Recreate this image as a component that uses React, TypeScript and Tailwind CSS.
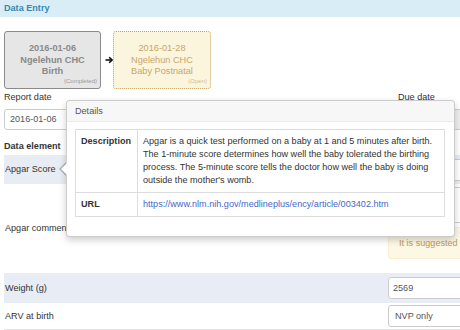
import React from 'react';

const DESCRIPTION =
  "Apgar is a quick test performed on a baby at 1 and 5 minutes after birth. The 1-minute score determines how well the baby tolerated the birthing process. The 5-minute score tells the doctor how well the baby is doing outside the mother's womb.";

function EventBox({ date, org, stage, status, done }: { date: string; org: string; stage: string; status: string; done?: boolean }) {
  return (
    <div
      className={
        done
          ? 'w-[97px] h-[58px] flex flex-col border border-[#8a8a8a] rounded-[3px] bg-[#e6e6e6] text-[#8a8a8a] font-bold'
          : 'w-[98px] h-[58px] flex flex-col border border-dotted border-[#c9a45f] rounded-[3px] bg-[#fcf5dd] text-[#c8a56a]'
      }
    >
      <div className="pt-[11px] text-center text-[9.2px] leading-[11.5px]">
        <div>{date}</div>
        <div>{org}</div>
        <div>{stage}</div>
      </div>
      <div className={done ? 'text-right pr-[3px] text-[6px] leading-[7px] font-normal text-[#999]' : 'text-right pr-[3px] text-[6px] leading-[7px] text-[#d5bb8c]'}>
        {status}
      </div>
    </div>
  );
}

function Row({ label, shaded, children, height }: { label: string; shaded?: boolean; children?: React.ReactNode; height: string }) {
  return (
    <div className={`flex ${height} ${shaded ? 'bg-[#e8edf5]' : 'bg-white'}`}>
      <div className="w-[384px] pl-[1px] flex items-center">{label}</div>
      <div className="w-[110px] flex flex-col justify-center">{children}</div>
    </div>
  );
}

export default function App() {
  return (
    <div className="relative w-[460px] h-[330px] overflow-hidden bg-white font-['Liberation_Sans',Arial,sans-serif] text-[9.1px] leading-[13px] text-[#333]">
      <div className="h-[17px] bg-[#d9edf7] px-[4px] flex items-center font-bold text-[#3a87ad]">Data Entry</div>

      <div className="w-[520px] px-[4px]">
        <div className="mt-[14px] flex items-center">
          <EventBox date="2016-01-06" org="Ngelehun CHC" stage="Birth" status="(Completed)" done />
          <svg className="ml-[4px] w-[8px] h-[8px]" viewBox="0 0 8 8" fill="none" stroke="#111" strokeWidth="1.6">
            <path d="M0.5 4H7" />
            <path d="M4.2 1.2L7 4L4.2 6.8" />
          </svg>
          <EventBox date="2016-01-28" org="Ngelehun CHC" stage="Baby Postnatal" status="(Open)" />
        </div>

        <div className="mt-[2px] flex">
          <div className="w-[394px]">
            <div>Report date</div>
            <div className="mt-[5px] w-[130px] h-[21px] border border-[#ccc] rounded-[3px] px-[5px] flex items-center text-[#555]">2016-01-06</div>
          </div>
          <div className="w-[110px]">
            <div>Due date</div>
            <div className="mt-[5px] h-[21px] border border-[#ccc] rounded-[3px] bg-[#eee]" />
          </div>
        </div>

        <div className="mt-[10px] font-bold">Data element</div>

        <div className="mt-[2px]">
          <Row label="Apgar Score" shaded height="h-[29px]">
            <div className="h-[22px] border border-[#ccc] rounded-[3px] bg-white" />
          </Row>
          <div className="flex h-[89px] bg-white">
            <div className="w-[384px] pl-[1px] flex items-center">Apgar comment</div>
            <div className="w-[110px] pt-[3px]">
              <div className="h-[36px] border border-[#ccc] rounded-[3px] bg-white" />
              <div className="mt-[4px] h-[32px] border border-[#fbeed5] rounded-[3px] bg-[#fcf8e3] pl-[10px] flex items-center whitespace-nowrap text-[#c09853]">
                It is suggested
              </div>
            </div>
          </div>
          <Row label="Weight (g)" shaded height="h-[30px]">
            <div className="h-[22px] border border-[#ccc] rounded-[3px] bg-white pl-[4px] flex items-center text-[#555]">2569</div>
          </Row>
          <div className="border-b border-[#e2e2e2]">
            <Row label="ARV at birth" height="h-[26px]">
              <div className="h-[22px] border border-[#ccc] rounded-[3px] bg-white pl-[6px] flex items-center text-[#555]">NVP only</div>
            </Row>
          </div>
        </div>
      </div>

      <div className="absolute top-[100px] left-[66px] w-[389px] bg-white border border-[rgba(0,0,0,0.2)] rounded-[4px] shadow-[0_3px_7px_rgba(0,0,0,0.2)]">
        <div className="absolute left-[-8px] top-[61px] w-0 h-0 border-y-[7px] border-y-transparent border-r-[7px] border-r-[rgba(0,0,0,0.25)]" />
        <div className="absolute left-[-6px] top-[62px] w-0 h-0 border-y-[6px] border-y-transparent border-r-[6px] border-r-white" />
        <div className="h-[21px] px-[8px] flex items-center bg-[#f7f7f7] border-b border-[#ebebeb] rounded-t-[4px] text-[#555]">Details</div>
        <div className="pt-[7px] pl-[8px] pb-[19px]">
          <table className="w-[370px] border-collapse">
            <tbody>
              <tr>
                <td className="w-[62px] border border-[#ddd] p-[5px] align-top font-bold">Description</td>
                <td className="border border-[#ddd] p-[5px] align-top">{DESCRIPTION}</td>
              </tr>
              <tr>
                <td className="border border-[#ddd] p-[5px] align-top font-bold">URL</td>
                <td className="border border-[#ddd] p-[5px] align-top text-[#4767c7]">https://www.nlm.nih.gov/medlineplus/ency/article/003402.htm</td>
              </tr>
            </tbody>
          </table>
        </div>
      </div>
    </div>
  );
}
